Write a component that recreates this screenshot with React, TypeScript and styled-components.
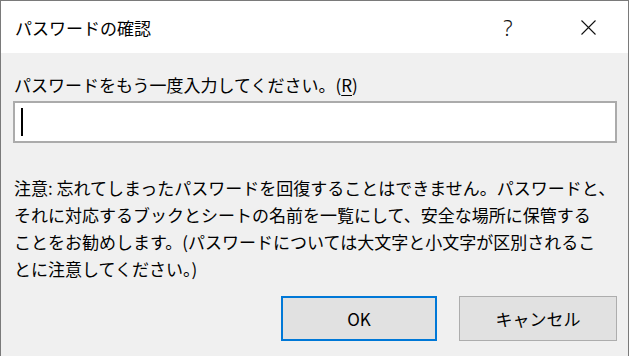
import React from "react";
import styled, { createGlobalStyle } from "styled-components";

const Global = createGlobalStyle`
  html, body { margin: 0; padding: 0; background: #ffffff; }
  body { font-family: "Noto Sans CJK JP", "Noto Sans", sans-serif; color: #000; }
  #root { width: 630px; height: 356px; overflow: hidden; }
`;

const Window = styled.div`
  width: 629px;
  height: 370px;
  box-sizing: border-box;
  border: 1px solid #7a7a7a;
  border-bottom: none;
  display: flex;
  flex-direction: column;
  background: #f0f0f0;
`;

const TitleBar = styled.div`
  height: 52px;
  flex: none;
  background: #ffffff;
  display: flex;
  align-items: center;
`;

const Title = styled.div`
  flex: 1;
  padding-left: 14px;
  padding-top: 2px;
  font-size: 17px;
  line-height: 24px;
  color: #000;
  white-space: nowrap;
`;

const CaptionButton = styled.div`
  width: 80px;
  height: 52px;
  display: flex;
  align-items: center;
  justify-content: center;
  font-family: "Noto Sans", sans-serif;
  font-weight: 300;
  font-size: 22px;
  color: #111;
`;

const Body = styled.div`
  flex: 1;
  display: flex;
  flex-direction: column;
  padding: 20px 11px 0 12px;
`;

const Label = styled.div`
  padding-left: 1px;
  font-size: 17px;
  line-height: 24px;
  white-space: nowrap;
  u { text-decoration: underline; text-underline-offset: 3px; }
`;

const Input = styled.div`
  margin-top: 4px;
  height: 42px;
  box-sizing: border-box;
  border: 2px solid #ababab;
  background: #ffffff;
  display: flex;
  align-items: center;
  padding-left: 6px;
`;

const Caret = styled.div`
  width: 2px;
  height: 28px;
  background: #000;
`;

const Note = styled.p`
  margin: 31px 0 0 0;
  padding-left: 1px;
  font-size: 17px;
  line-height: 27px;
  white-space: nowrap;
`;

const ButtonRow = styled.div`
  margin-top: 14px;
  display: flex;
  justify-content: flex-end;
  gap: 22px;
`;

const Button = styled.div<{ $primary?: boolean }>`
  width: ${(p) => (p.$primary ? "156px" : "158px")};
  height: 45px;
  box-sizing: border-box;
  background: #e1e1e1;
  border: ${(p) => (p.$primary ? "2px solid #0078d7" : "1px solid #adadad")};
  display: flex;
  align-items: center;
  justify-content: center;
  font-size: 17px;
  color: #000;
`;

export default function App() {
  return (
    <>
      <Global />
      <Window>
        <TitleBar>
          <Title>パスワードの確認</Title>
          <CaptionButton>?</CaptionButton>
          <CaptionButton>
            <svg width="15" height="15" viewBox="0 0 15 15">
              <path d="M0.5 0.5 L14.5 14.5 M14.5 0.5 L0.5 14.5" stroke="#111" strokeWidth="1.1" fill="none" />
            </svg>
          </CaptionButton>
        </TitleBar>
        <Body>
          <Label>
            パスワードをもう一度入力してください。(<u>R</u>)
          </Label>
          <Input>
            <Caret />
          </Input>
          <Note>
            注意: 忘れてしまったパスワードを回復することはできません。パスワードと、
            <br />
            それに対応するブックとシートの名前を一覧にして、安全な場所に保管する
            <br />
            ことをお勧めします。(パスワードについては大文字と小文字が区別されるこ
            <br />
            とに注意してください。)
          </Note>
          <ButtonRow>
            <Button $primary>OK</Button>
            <Button>キャンセル</Button>
          </ButtonRow>
        </Body>
      </Window>
    </>
  );
}
